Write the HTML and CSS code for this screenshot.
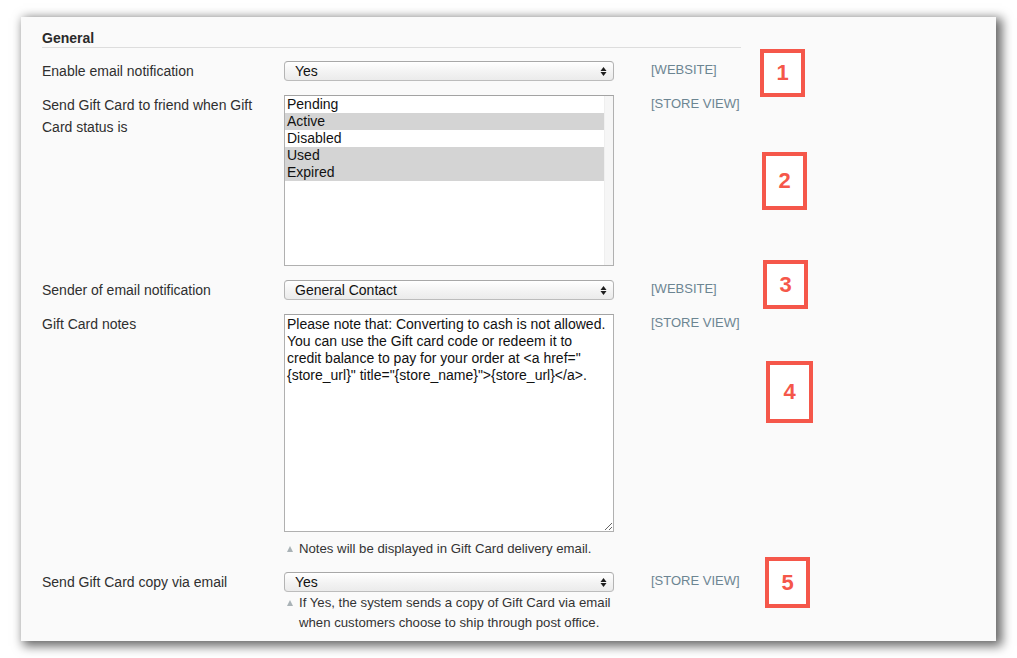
FILE: index.html
```html
<!DOCTYPE html>
<html lang="en">
<head>
<meta charset="utf-8">
<title>Gift Card - General</title>
<link rel="stylesheet" href="styles.css">
</head>
<body>
<div class="panel">
  <div class="section">
    <h3 class="section-title">General</h3>
    <div class="form">
      <div class="row">
        <label class="label">Enable email notification</label>
        <div class="value">
          <div class="select-wrap">
            <select class="select"><option>Yes</option><option>No</option></select>
            <svg class="arrows" width="7" height="9" viewBox="0 0 7 9"><polygon points="0.5,4 3.5,0 6.5,4" /><polygon points="0.5,5 3.5,9 6.5,5" /></svg>
          </div>
        </div>
        <div class="scope">[WEBSITE]</div>
      </div>

      <div class="row">
        <label class="label">Send Gift Card to friend when Gift Card status is</label>
        <div class="value">
          <div class="listbox">
            <ul class="options">
              <li>Pending</li>
              <li class="selected">Active</li>
              <li>Disabled</li>
              <li class="selected">Used</li>
              <li class="selected">Expired</li>
            </ul>
            <div class="track"></div>
          </div>
        </div>
        <div class="scope">[STORE VIEW]</div>
      </div>

      <div class="row">
        <label class="label">Sender of email notification</label>
        <div class="value">
          <div class="select-wrap">
            <select class="select"><option>General Contact</option></select>
            <svg class="arrows" width="7" height="9" viewBox="0 0 7 9"><polygon points="0.5,4 3.5,0 6.5,4" /><polygon points="0.5,5 3.5,9 6.5,5" /></svg>
          </div>
        </div>
        <div class="scope">[WEBSITE]</div>
      </div>

      <div class="row">
        <label class="label">Gift Card notes</label>
        <div class="value">
          <textarea class="textarea">Please note that: Converting to cash is not allowed.
You can use the Gift card code or redeem it to
credit balance to pay for your order at &lt;a href="
{store_url}" title="{store_name}"&gt;{store_url}&lt;/a&gt;.</textarea>
          <p class="note">Notes will be displayed in Gift Card delivery email.</p>
        </div>
        <div class="scope">[STORE VIEW]</div>
      </div>

      <div class="row">
        <label class="label">Send Gift Card copy via email</label>
        <div class="value">
          <div class="select-wrap">
            <select class="select"><option>Yes</option><option>No</option></select>
            <svg class="arrows" width="7" height="9" viewBox="0 0 7 9"><polygon points="0.5,4 3.5,0 6.5,4" /><polygon points="0.5,5 3.5,9 6.5,5" /></svg>
          </div>
          <p class="note note-tight">If Yes, the system sends a copy of Gift Card via email when customers choose to ship through post office.</p>
        </div>
        <div class="scope">[STORE VIEW]</div>
      </div>
    </div>
  </div>

  <div class="callout callout-1">1</div>
  <div class="callout callout-2">2</div>
  <div class="callout callout-3">3</div>
  <div class="callout callout-4">4</div>
  <div class="callout callout-5">5</div>
</div>
</body>
</html>
```
FILE: styles.css
```css
* { box-sizing: border-box; }

html, body {
  margin: 0;
  padding: 0;
  background: #ffffff;
}

body {
  font-family: "Liberation Sans", Arial, Helvetica, sans-serif;
  color: #333333;
  width: 1017px;
  height: 658px;
  overflow: hidden;
}

.panel {
  position: relative;
  margin: 17px 0 0 21px;
  width: 975px;
  height: 624px;
  padding: 13px 21px 0 21px;
  background: #fafafa;
  box-shadow: 4px 3px 10px 2px rgba(0, 0, 0, 0.6);
}

.section {
  width: 699px;
}

.section-title {
  margin: 0;
  font-size: 14px;
  font-weight: bold;
  line-height: 16px;
  color: #2a2a2a;
  padding-bottom: 1px;
  border-bottom: 1px solid #dddddd;
}

.form {
  padding-top: 13px;
}

.row {
  display: grid;
  grid-template-columns: 242px 330px auto;
  margin-bottom: 13px;
}

.row:nth-child(2) {
  margin-bottom: 14px;
}

.label {
  font-size: 14px;
  line-height: 22px;
  margin-top: -1px;
  color: #2f2f2f;
  padding-right: 10px;
}

.scope {
  padding-left: 37px;
  font-size: 13px;
  line-height: 18px;
  color: #6c8592;
  white-space: nowrap;
}

.select-wrap {
  position: relative;
  height: 20px;
}

.select {
  appearance: none;
  -webkit-appearance: none;
  display: block;
  width: 100%;
  height: 20px;
  margin: 0;
  padding: 0 20px 0 10px;
  font-family: "Liberation Sans", Arial, Helvetica, sans-serif;
  font-size: 14px;
  line-height: 18px;
  color: #111111;
  border: 1px solid #b4b4b4;
  border-top-color: #a8a8a8;
  border-bottom-color: #bcbcbc;
  border-radius: 4px;
  background: linear-gradient(#ffffff, #f2f2f2 60%, #ebebeb);
  box-shadow: inset 0 1px 0 #ffffff;
}

.arrows {
  position: absolute;
  right: 7px;
  top: 6px;
  fill: #1e1e1e;
}

.listbox {
  display: flex;
  height: 171px;
  border: 1px solid #b0b0b0;
  border-top-color: #a3a3a3;
  background: #ffffff;
}

.options {
  list-style: none;
  margin: 0;
  padding: 0;
  flex: 1;
}

.options li {
  font-size: 14px;
  line-height: 17px;
  height: 17px;
  padding-left: 2px;
  color: #111111;
}

.options li.selected {
  background: #d4d4d4;
}

.track {
  width: 9px;
  background: #f6f6f6;
  border-left: 1px solid #efefef;
}

.textarea {
  display: block;
  width: 330px;
  height: 218px;
  margin: 0;
  padding: 1px 2px;
  font-family: "Liberation Sans", Arial, Helvetica, sans-serif;
  font-size: 14px;
  line-height: 17px;
  color: #111111;
  border: 1px solid #b0b0b0;
  border-top-color: #a3a3a3;
  background: #ffffff;
  white-space: pre;
  overflow: hidden;
  resize: both;
}

.note {
  margin: 7px 0 0 0;
  font-size: 13.2px;
  line-height: 20px;
  color: #333333;
  padding-left: 15px;
  position: relative;
}

.note::before {
  content: "";
  position: absolute;
  left: 3px;
  top: 7px;
  width: 0;
  height: 0;
  border-left: 3.5px solid transparent;
  border-right: 3.5px solid transparent;
  border-bottom: 6px solid #a9b2b6;
}

.note-tight {
  margin-top: 1px;
}

.callout {
  position: absolute;
  width: 45px;
  border: 4px solid #f5574a;
  background: #ffffff;
  color: #f5574a;
  font-family: "Liberation Sans", Arial, sans-serif;
  font-weight: bold;
  font-size: 22px;
  display: flex;
  align-items: center;
  justify-content: center;
}

.callout-1 { left: 739px; top: 32px; height: 48px; }
.callout-2 { left: 741px; top: 135px; height: 58px; }
.callout-3 { left: 742px; top: 243px; height: 49px; }
.callout-4 { left: 745px; top: 344px; width: 47px; height: 62px; }
.callout-5 { left: 744px; top: 540px; height: 51px; }
```
